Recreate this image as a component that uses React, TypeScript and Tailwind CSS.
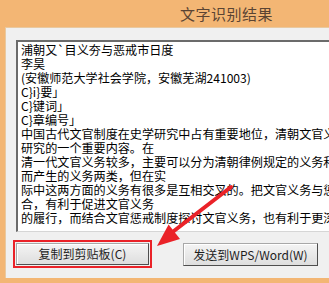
import React from "react";

const lines = [
  "浦朝又`目义夯与恶戒市日度",
  "李昊",
  "(安徽师范大学社会学院，安徽芜湖241003)",
  "C}i}要」",
  "C}键词」",
  "C}章编号」",
  "中国古代文官制度在史学研究中占有重要地位，清朝文官义务",
  "研究的一个重要内容。在",
  "清一代文官义务较多，主要可以分为清朝律例规定的义务和",
  "而产生的义务两类，但在实",
  "际中这两方面的义务有很多是互相交叉的。把文官义务与惩戒",
  "合，有利于促进文官义务",
  "的履行，而结合文官惩戒制度探讨文官义务，也有利于更深",
];

export default function App() {
  return (
    <div
      className="relative w-[329px] h-[283px] overflow-hidden bg-[#f3b674] flex flex-col"
      style={{ fontFamily: '"Noto Sans CJK SC", "Noto Sans", sans-serif' }}
    >
      <div className="h-[27px] shrink-0 flex items-center pl-[180px]">
        <span className="text-[15px] leading-none text-[#5a4433] tracking-[0.5px]">文字识别结果</span>
      </div>
      <div className="flex-1 ml-[5px] mb-[5px] bg-[#f0f0f0] border-t border-l border-[#e9c9a0] flex flex-col">
        <div className="mt-[12px] ml-[10px] w-[340px] h-[192px] bg-white border-t-2 border-l-2 border-b border-[#6b6b6b] border-b-[#d6d6d6] pl-[3px] pt-[1px] overflow-hidden">
          {lines.map((l, i) => (
            <div key={i} className="text-[12.1px] leading-[14px] text-black whitespace-nowrap">
              {l}
            </div>
          ))}
        </div>
        <div className="mt-[11px] flex items-start">
          <button className="ml-[10px] w-[133px] h-[22px] bg-gradient-to-b from-[#f4f4f4] to-[#dedede] border border-[#a8a8a8] border-r-[#4e4e4e] border-b-[#4e4e4e] shadow-[inset_1px_1px_0_#ffffff] text-[12px] leading-none text-[#1e1e1e] outline-2 outline-[#ea2228] outline-offset-[1px]">
            复制到剪贴板(C)
          </button>
          <button className="ml-[34px] w-[135px] h-[23px] bg-gradient-to-b from-[#f4f4f4] to-[#dedede] border border-[#a8a8a8] border-r-[#4e4e4e] border-b-[#4e4e4e] shadow-[inset_1px_1px_0_#ffffff] text-[12px] leading-none text-[#1e1e1e]">
            发送到WPS/Word(W)
          </button>
        </div>
      </div>
      <svg className="absolute left-0 top-0 pointer-events-none" width="329" height="283" viewBox="0 0 329 283">
        <line x1="231" y1="187" x2="170" y2="234" stroke="#ea2228" strokeWidth="4" strokeLinecap="round" />
        <polygon points="157,246 180,239 168.6,224.5" fill="#ea2228" />
      </svg>
    </div>
  );
}
